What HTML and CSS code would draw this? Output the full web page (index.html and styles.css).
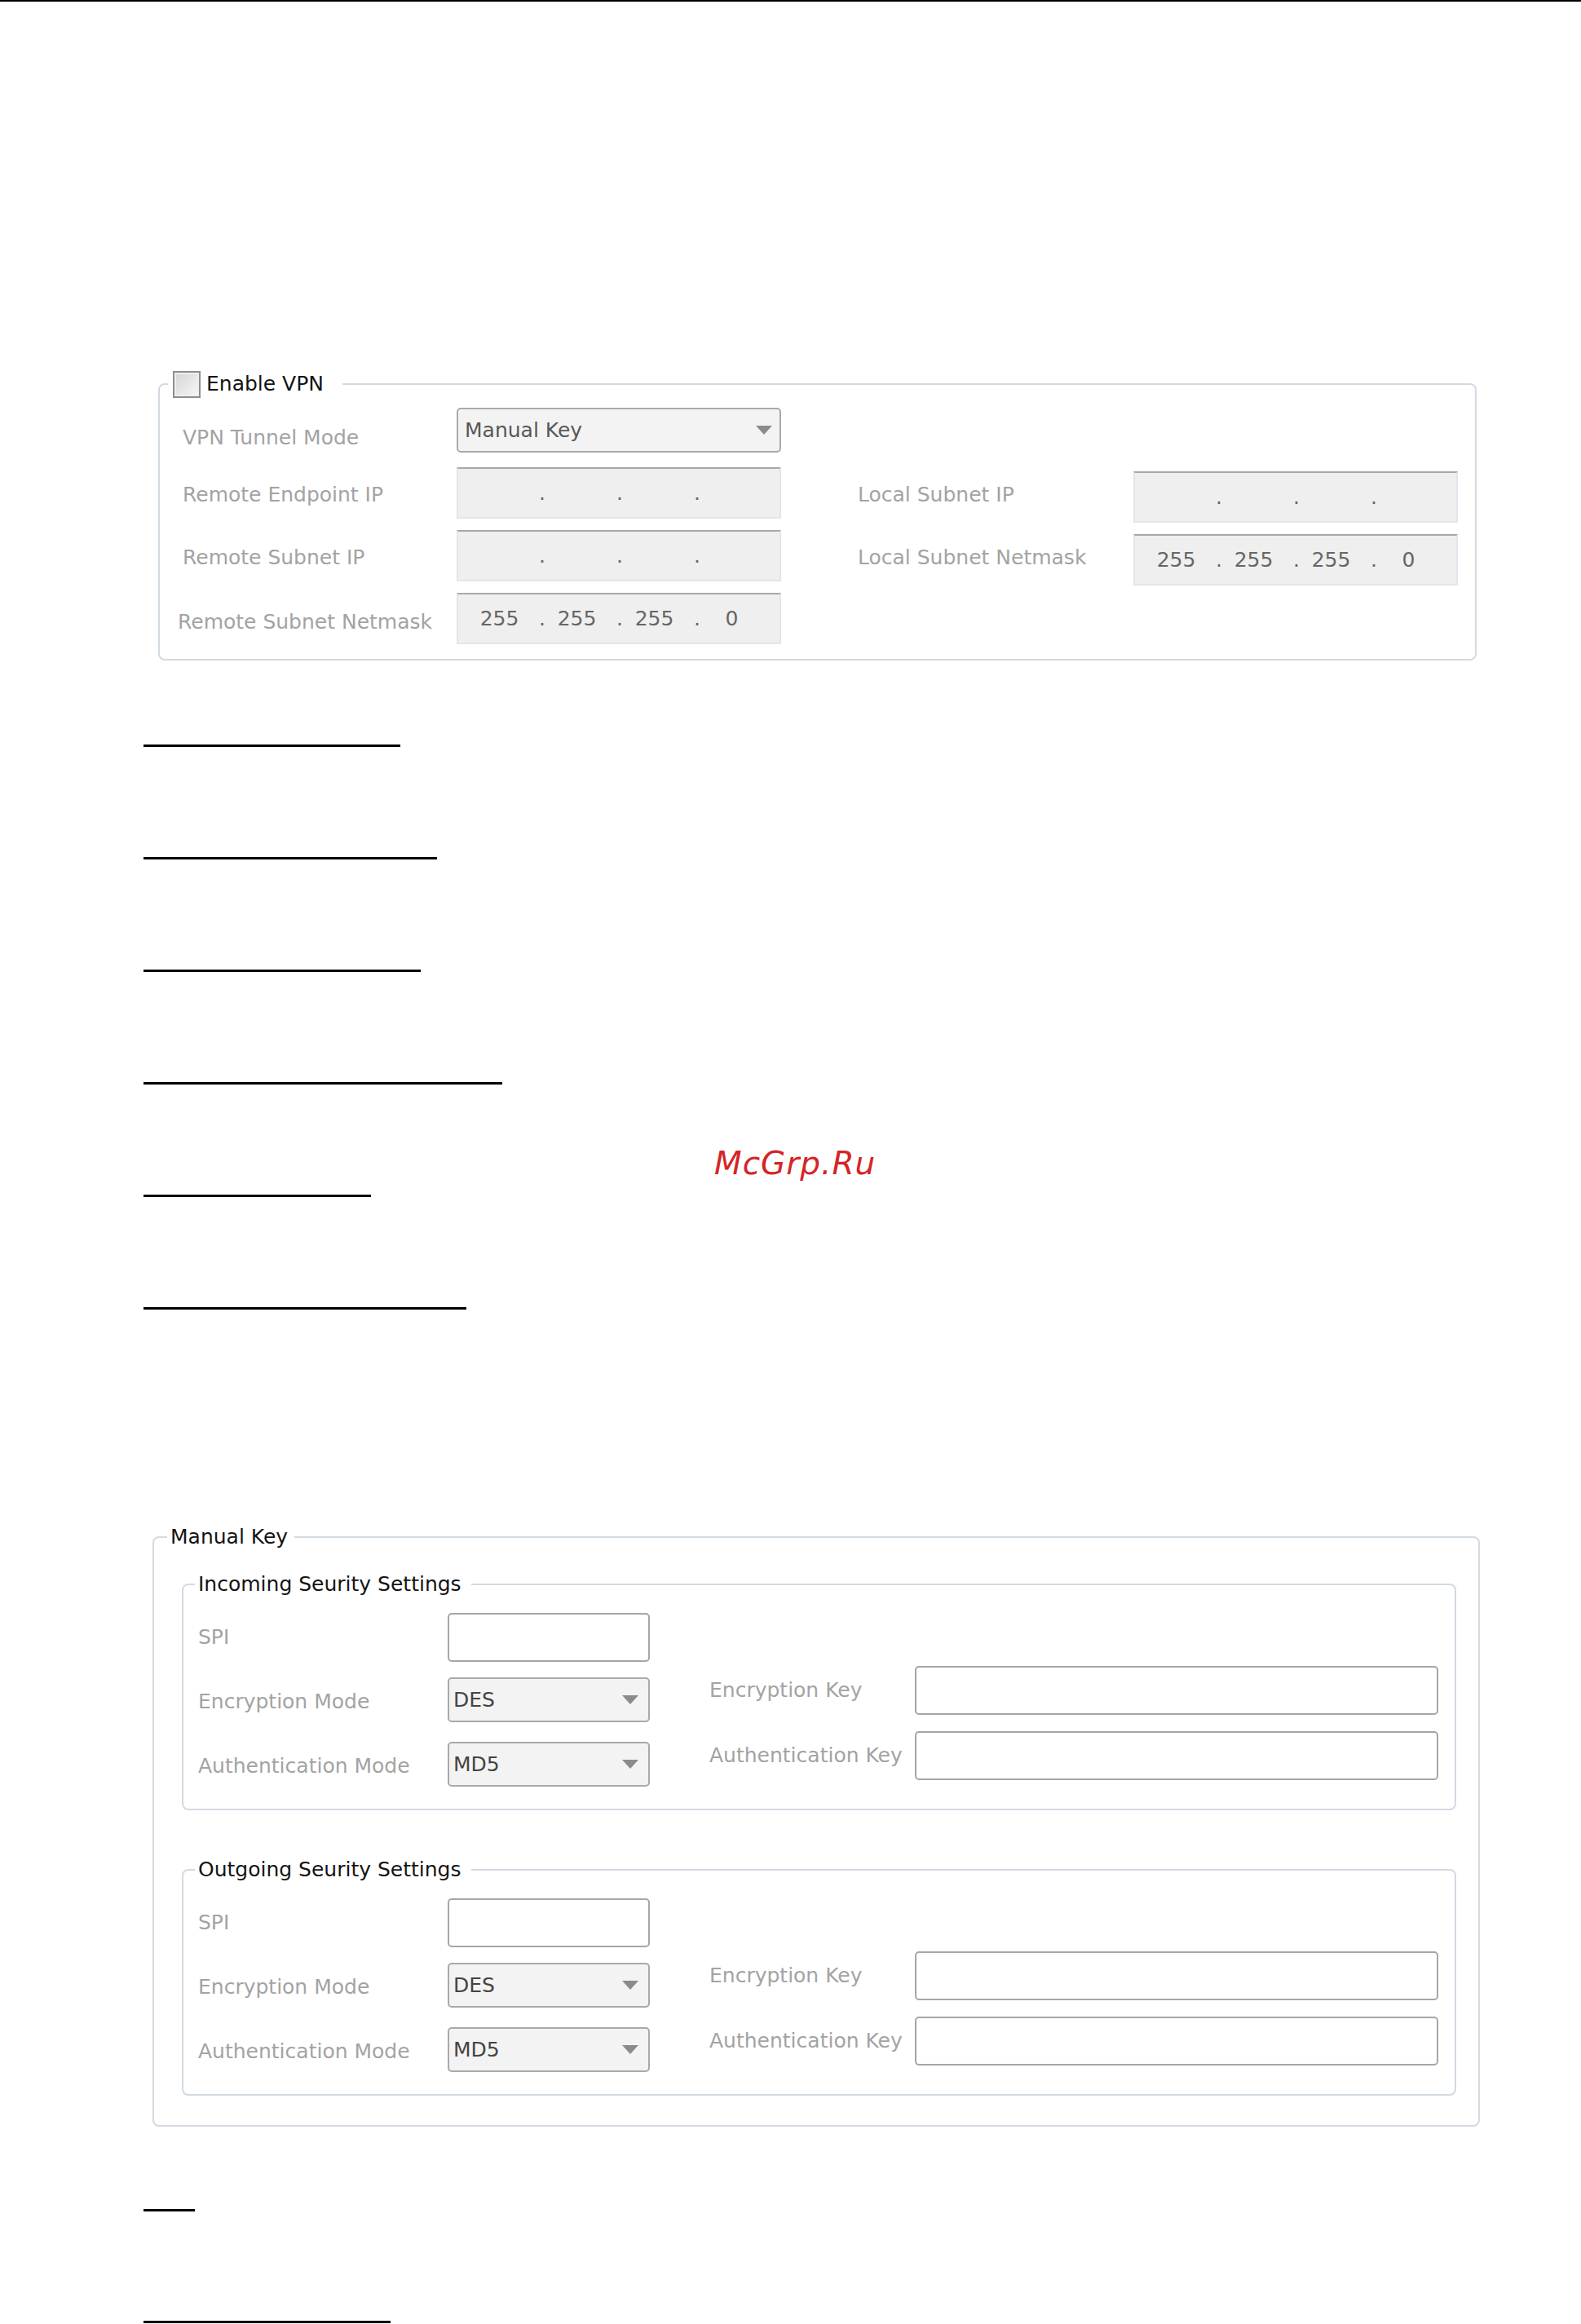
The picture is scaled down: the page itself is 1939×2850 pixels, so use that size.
FILE: index.html
```html
<!DOCTYPE html>
<html>
<head>
  <meta charset="utf-8">
  <title>VPN Settings</title>
  <link rel="stylesheet" href="styles.css">
</head>
<body>
  <div class="top-rule"></div>

  <div class="page">

    <fieldset class="box vpn">
      <legend class="box-title"><span class="check"></span>Enable VPN</legend>
      <div class="vpn-grid">
        <span class="label label-l label-first">VPN Tunnel Mode</span>
        <div class="select select-mode">Manual Key
          <svg class="arrow" viewBox="0 0 20 11"><path d="M0 0H20L10 11Z"/></svg>
        </div>

        <span class="label label-l">Remote Endpoint IP</span>
        <div class="ip"><span></span><span class="dot">.</span><span></span><span class="dot">.</span><span></span><span class="dot">.</span><span></span></div>
        <span class="label label-r">Local Subnet IP</span>
        <div class="ip ip-r"><span></span><span class="dot">.</span><span></span><span class="dot">.</span><span></span><span class="dot">.</span><span></span></div>

        <span class="label label-l">Remote Subnet IP</span>
        <div class="ip"><span></span><span class="dot">.</span><span></span><span class="dot">.</span><span></span><span class="dot">.</span><span></span></div>
        <span class="label label-r">Local Subnet Netmask</span>
        <div class="ip ip-r"><span>255</span><span class="dot">.</span><span>255</span><span class="dot">.</span><span>255</span><span class="dot">.</span><span>0</span></div>

        <span class="label label-l label-wide">Remote Subnet Netmask</span>
        <div class="ip"><span>255</span><span class="dot">.</span><span>255</span><span class="dot">.</span><span>255</span><span class="dot">.</span><span>0</span></div>
      </div>
    </fieldset>

    <div class="rules">
      <div class="rule" style="width: 315px"></div>
      <div class="rule" style="width: 360px"></div>
      <div class="rule" style="width: 340px"></div>
      <div class="rule" style="width: 440px"></div>
      <div class="rule" style="width: 279px"></div>
      <div class="rule" style="width: 396px"></div>
      <span class="watermark">McGrp.Ru</span>
    </div>

    <fieldset class="box manual">
      <legend class="box-title">Manual Key</legend>

      <fieldset class="box sec">
        <legend class="box-title">Incoming Seurity Settings</legend>
        <div class="sec-body">
          <div class="sec-left">
            <span class="label">SPI</span>
            <input class="field" type="text">
            <span class="label">Encryption Mode</span>
            <div class="select">DES
              <svg class="arrow" viewBox="0 0 20 11"><path d="M0 0H20L10 11Z"/></svg>
            </div>
            <span class="label">Authentication Mode</span>
            <div class="select">MD5
              <svg class="arrow" viewBox="0 0 20 11"><path d="M0 0H20L10 11Z"/></svg>
            </div>
          </div>
          <div class="sec-right">
            <span class="label">Encryption Key</span>
            <input class="field" type="text">
            <span class="label">Authentication Key</span>
            <input class="field" type="text">
          </div>
        </div>
      </fieldset>

      <fieldset class="box sec sec-out">
        <legend class="box-title">Outgoing Seurity Settings</legend>
        <div class="sec-body">
          <div class="sec-left">
            <span class="label">SPI</span>
            <input class="field" type="text">
            <span class="label">Encryption Mode</span>
            <div class="select">DES
              <svg class="arrow" viewBox="0 0 20 11"><path d="M0 0H20L10 11Z"/></svg>
            </div>
            <span class="label">Authentication Mode</span>
            <div class="select">MD5
              <svg class="arrow" viewBox="0 0 20 11"><path d="M0 0H20L10 11Z"/></svg>
            </div>
          </div>
          <div class="sec-right">
            <span class="label">Encryption Key</span>
            <input class="field" type="text">
            <span class="label">Authentication Key</span>
            <input class="field" type="text">
          </div>
        </div>
      </fieldset>
    </fieldset>

    <div class="rules rules-end">
      <div class="rule" style="width: 63px"></div>
      <div class="rule" style="width: 303px"></div>
    </div>

  </div>
</body>
</html>
```

FILE: styles.css
```css
body {
  margin: 0;
  font-family: "DejaVu Sans", Verdana, sans-serif;
  font-size: 25px;
  background: #fff;
}

.top-rule {
  height: 2px;
  background: #000;
}

.page {
  padding-left: 176px;
}

/* Framed groups */
.box {
  box-sizing: border-box;
  margin: 0;
  padding: 0;
  border: 2px solid #d2dae2;
  border-radius: 8px;
  min-inline-size: 0;
}

.box-title {
  color: #141414;
  line-height: 30px;
  padding: 0 8px 0 4px;
}

.label {
  color: #a3a3a3;
  line-height: 30px;
  white-space: nowrap;
}

/* Enable VPN group */
.vpn {
  margin: 452px 0 0 18px;
  width: 1617px;
}

.vpn > .box-title {
  display: flex;
  align-items: center;
  height: 34px;
  margin-left: 10px;
  padding: 0 23px 0 6px;
}

.check {
  box-sizing: border-box;
  width: 34px;
  height: 33px;
  margin-right: 7px;
  border: 2px solid #8e8e8e;
  background: linear-gradient(135deg, #d4d4d4, #f7f7f7);
  box-shadow: inset 0 0 0 2px #eeeeee;
}

.vpn-grid {
  display: grid;
  grid-template-columns: 336px 398px 94px 338px 398px;
  grid-template-rows: 59px 64px 64px 64px;
  row-gap: 13px;
  align-items: center;
  padding: 12px 0 18px 28px;
}

.vpn-grid .label {
  padding-top: 6px;
}

.label-l { grid-column: 1; }
.label-r { grid-column: 4; }

.vpn-grid .label-first { padding-top: 14px; }
.vpn-grid .label-wide { padding-top: 10px; margin-left: -6px; }

/* Drop-down boxes */
.select {
  box-sizing: border-box;
  height: 55px;
  display: flex;
  align-items: center;
  justify-content: space-between;
  padding: 0 12px 0 5px;
  border: 2px solid #a9a9a9;
  border-radius: 5px;
  background: #f3f3f3;
  color: #444;
  align-self: start;
}

.select-mode {
  padding: 0 9px 0 8px;
  color: #585858;
}

.arrow {
  width: 20px;
  height: 11px;
  fill: #8b8b8b;
}

/* IP address boxes */
.ip {
  box-sizing: border-box;
  height: 63px;
  display: flex;
  align-items: center;
  padding-left: 15px;
  border: 2px solid #e2e5ee;
  border-top-color: #a8a8a8;
  background: #efefef;
  color: #666;
  align-self: start;
  margin-top: 1px;
}

.ip span {
  width: 71px;
  text-align: center;
}

.ip .dot {
  box-sizing: border-box;
  width: 24px;
  padding-left: 13px;
  text-align: left;
}

.ip-r {
  margin-top: 6px;
}

/* Text fields */
.field {
  box-sizing: border-box;
  width: 100%;
  height: 60px;
  margin: 0;
  padding: 0 6px;
  border: 2px solid #a6a6a6;
  border-radius: 5px;
  background: #fff;
  font: inherit;
}

/* Underlined links */
.rules {
  position: relative;
  display: flex;
  flex-direction: column;
  align-items: flex-start;
  gap: 135px;
  margin-top: 103px;
}

.rule {
  height: 3px;
  background: #000;
}

.watermark {
  position: absolute;
  left: 700px;
  top: 494px;
  font-size: 39px;
  font-style: italic;
  line-height: 40px;
  letter-spacing: 1px;
  color: #d42527;
}

.rules-end {
  margin-top: 101px;
  gap: 134px;
}

/* Manual key group */
.manual {
  margin: 264px 0 0 11px;
  width: 1628px;
  padding-bottom: 36px;
}

.manual > .box-title {
  margin-left: 16px;
}

.sec {
  margin: 28px 0 0 34px;
  width: 1563px;
}

.sec-out {
  margin-top: 58px;
}

.sec > .box-title {
  margin-left: 14px;
  padding: 0 12px 0 4px;
}

.sec-body {
  display: flex;
  align-items: flex-start;
  padding: 20px 0 22px 18px;
}

.sec-left {
  display: grid;
  grid-template-columns: 306px 248px;
  grid-template-rows: repeat(3, 60px);
  row-gap: 19px;
  align-items: center;
}

.sec-right {
  display: grid;
  grid-template-columns: 252px 642px;
  grid-template-rows: repeat(2, 60px);
  row-gap: 20px;
  align-items: center;
  margin: 65px 0 0 73px;
}
```
